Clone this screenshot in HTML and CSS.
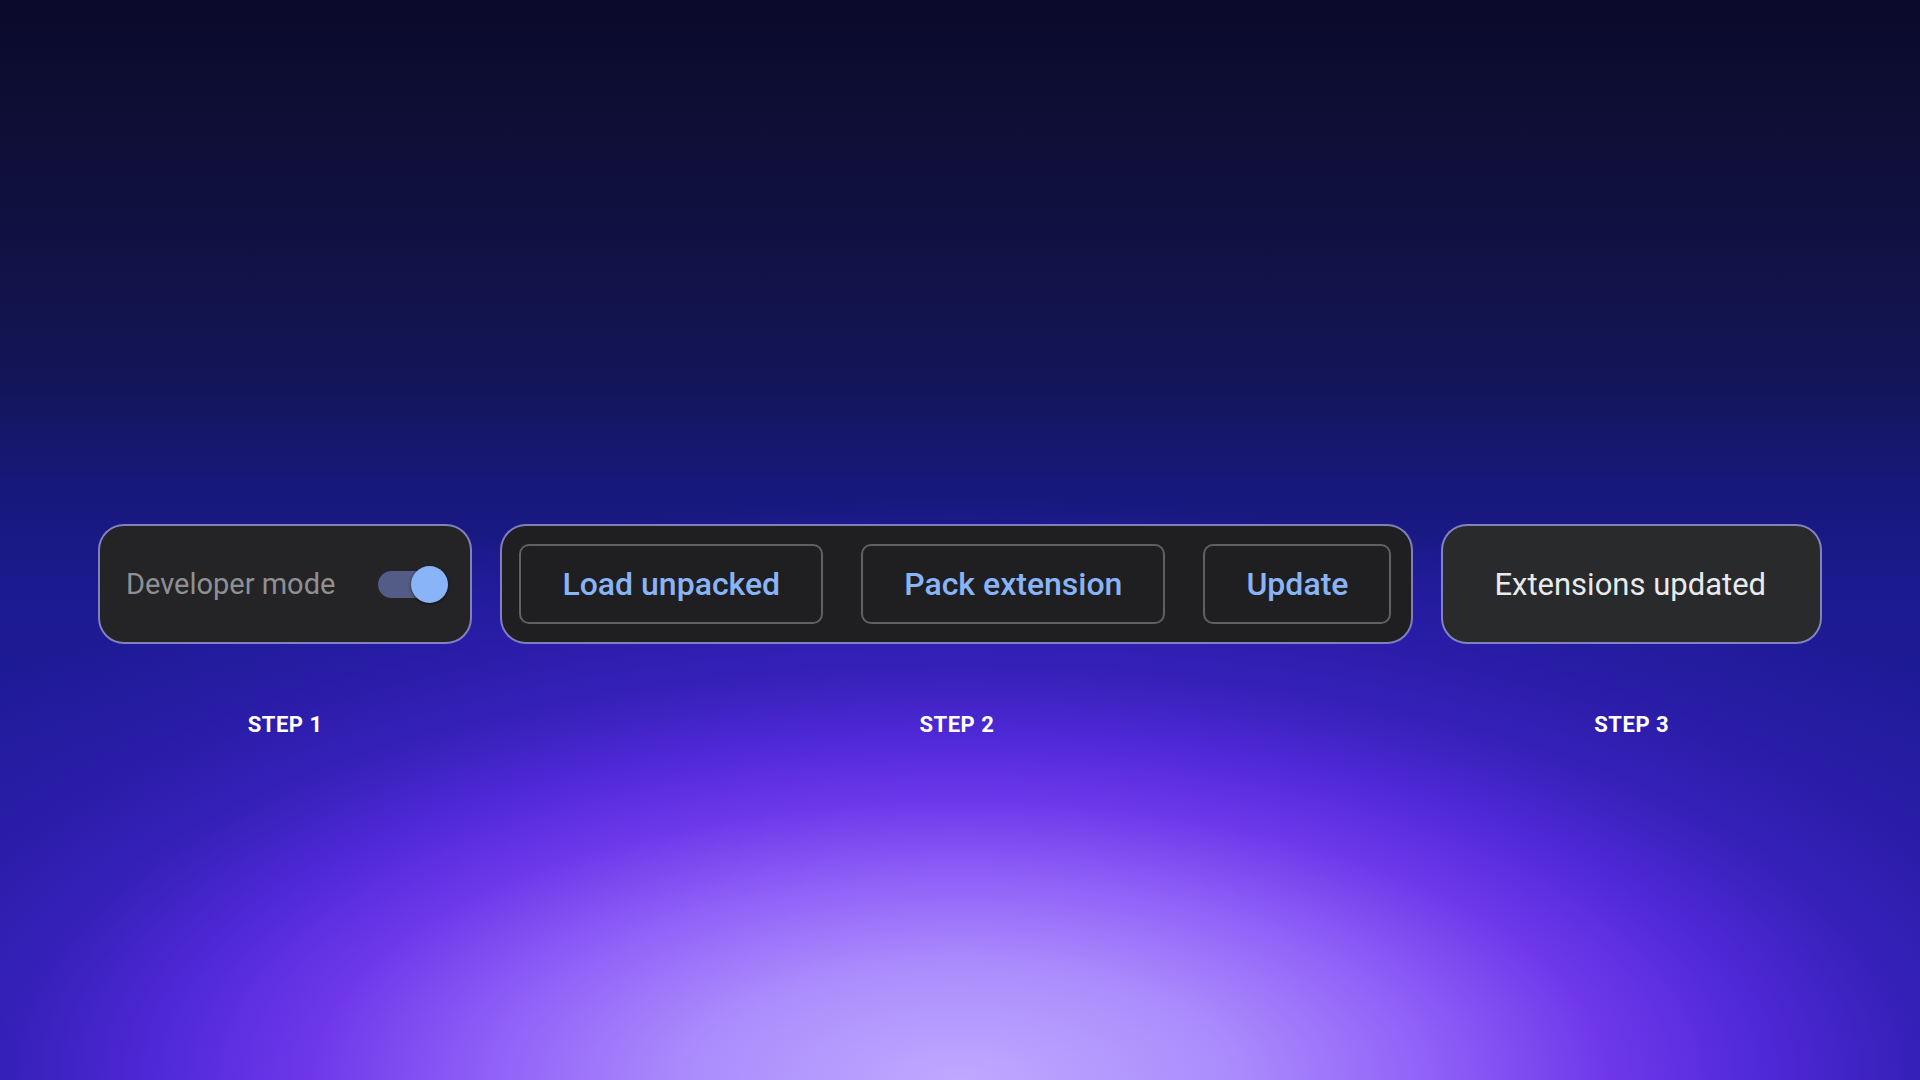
FILE: index.html
```html
<!DOCTYPE html>
<html lang="en">
<head>
    <meta charset="UTF-8">
    <meta name="viewport" content="width=device-width, initial-scale=1.0">
    <title>Extension Steps</title>
    <link rel="stylesheet" href="styles.css">
</head>
<body>
    <main class="steps">
        <section class="step">
            <div class="card card-toggle">
                <span class="toggle-label">Developer mode</span>
                <span class="toggle">
                    <span class="toggle-track"></span>
                    <span class="toggle-knob"></span>
                </span>
            </div>
            <div class="step-label">STEP 1</div>
        </section>

        <section class="step">
            <div class="card card-actions">
                <button class="action-btn">Load unpacked</button>
                <button class="action-btn">Pack extension</button>
                <button class="action-btn">Update</button>
            </div>
            <div class="step-label">STEP 2</div>
        </section>

        <section class="step">
            <div class="card card-toast">
                <span class="toast-text">Extensions updated</span>
            </div>
            <div class="step-label">STEP 3</div>
        </section>
    </main>
</body>
</html>
```

FILE: styles.css
```css
html, body {
    height: 100%;
}

body {
    margin: 0;
    font-family: Roboto, 'Noto Sans', sans-serif;
    background-color: #14145c;
    background-image:
        radial-gradient(ellipse 1350px 580px at 50% 100%,
            #bfa9ff 0%,
            #ab8cfc 20%,
            #9060f8 35%,
            #6e38ea 48%,
            #5029d8 59%,
            #3520b8 71%,
            #271ca4 85%,
            rgba(34, 28, 156, 0) 100%),
        linear-gradient(to bottom, #0b0a2b 0%, #10113f 20%, #131558 35%, #17187a 45%, #1c1a90 55%, #221ca0 75%, #261ca8 100%);
    overflow: hidden;
}

.steps {
    display: flex;
    justify-content: center;
    align-items: flex-start;
    gap: 28px;
    padding-top: 524px;
}

.step {
    display: flex;
    flex-direction: column;
    align-items: center;
}

.card {
    box-sizing: border-box;
    height: 120px;
    display: flex;
    align-items: center;
    border: 2px solid rgba(160, 160, 240, 0.75);
    border-radius: 26px;
}

/* step 1 */
.card-toggle {
    background-color: #242426;
    padding: 0 22px 0 26px;
    gap: 43px;
}

.toggle-label {
    font-size: 29px;
    color: #8f9094;
}

.toggle {
    position: relative;
    width: 70px;
    height: 37px;
}

.toggle-track {
    position: absolute;
    left: 0;
    top: 5px;
    width: 62px;
    height: 27px;
    border-radius: 14px;
    background-color: #535c86;
}

.toggle-knob {
    position: absolute;
    right: 0;
    top: 0;
    width: 37px;
    height: 37px;
    border-radius: 50%;
    background-color: #8ab4f8;
    box-shadow: 0 1px 3px rgba(0, 0, 0, 0.6);
}

/* step 2 */
.card-actions {
    background-color: #1f1f21;
    padding: 0 20px 0 17px;
    gap: 38px;
}

.action-btn {
    box-sizing: border-box;
    height: 80px;
    padding: 0 41px;
    background-color: #1f1f21;
    border: 2px solid #5f6063;
    border-radius: 10px;
    color: #8ab4f8;
    font-family: Roboto, sans-serif;
    font-size: 32px;
    font-weight: 500;
    cursor: pointer;
}

/* step 3 */
.card-toast {
    background-color: #292a2c;
    padding: 0 54px 0 51px;
}

.toast-text {
    font-size: 31px;
    color: #e8eaed;
}

.step-label {
    margin-top: 68px;
    font-size: 22px;
    font-weight: 700;
    letter-spacing: 0.5px;
    color: #ffffff;
}
```
